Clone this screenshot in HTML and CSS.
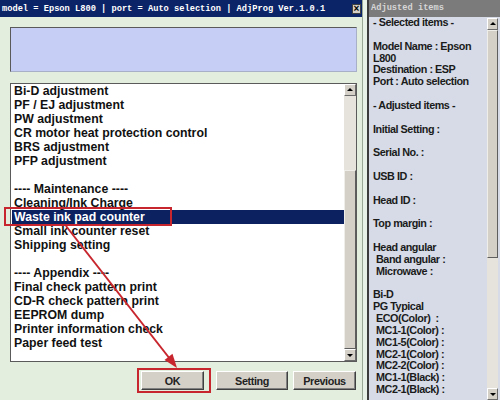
FILE: index.html
```html
<!DOCTYPE html>
<html lang="en">
  <head>
    <meta charset="UTF-8" />
    <title>AdjProg - Epson L800</title>
    <link rel="stylesheet" href="styles.css">
  </head>
  <body>
    <div class="screen">
      <div class="window">
        <div class="titlebar">
          <span class="title">model = Epson L800 | port = Auto selection | AdjProg Ver.1.0.1</span>
          <span class="close">&#215;</span>
        </div>

        <div class="content">
          <div class="info-box"></div>

          <div class="listbox">
            <ul class="items">
              <li>Bi-D adjustment</li>
              <li>PF / EJ adjustment</li>
              <li>PW adjustment</li>
              <li>CR motor heat protection control</li>
              <li>BRS adjustment</li>
              <li>PFP adjustment</li>
              <li>&nbsp;</li>
              <li>---- Maintenance ----</li>
              <li>Cleaning/Ink Charge</li>
              <li class="selected">Waste ink pad counter</li>
              <li>Small ink counter reset</li>
              <li>Shipping setting</li>
              <li>&nbsp;</li>
              <li>---- Appendix ----</li>
              <li>Final check pattern print</li>
              <li>CD-R check pattern print</li>
              <li>EEPROM dump</li>
              <li>Printer information check</li>
              <li>Paper feed test</li>
            </ul>
            <div class="vscroll list-scroll">
              <div class="arrow up"></div>
              <div class="track"></div>
              <div class="thumb"></div>
              <div class="arrow down"></div>
            </div>
          </div>

          <div class="buttons">
            <button class="btn btn-ok">OK</button>
            <button class="btn btn-setting">Setting</button>
            <button class="btn btn-previous">Previous</button>
          </div>
        </div>
      </div>

      <div class="divider"></div>

      <div class="panel">
        <div class="panel-title">Adjusted items</div>
        <div class="panel-body">
          <div class="panel-text">
            <div>- Selected items -</div>
            <div>&nbsp;</div>
            <div>Model Name : Epson</div>
            <div>L800</div>
            <div>Destination : ESP</div>
            <div>Port : Auto selection</div>
            <div>&nbsp;</div>
            <div>- Adjusted items -</div>
            <div>&nbsp;</div>
            <div>Initial Setting :</div>
            <div>&nbsp;</div>
            <div>Serial No. :</div>
            <div>&nbsp;</div>
            <div>USB ID :</div>
            <div>&nbsp;</div>
            <div>Head ID :</div>
            <div>&nbsp;</div>
            <div>Top margin :</div>
            <div>&nbsp;</div>
            <div>Head angular</div>
            <div class="indent">Band angular :</div>
            <div class="indent">Microwave :</div>
            <div>&nbsp;</div>
            <div>Bi-D</div>
            <div>PG Typical</div>
            <div class="indent">ECO(Color)&nbsp; :</div>
            <div class="indent">MC1-1(Color) :</div>
            <div class="indent">MC1-5(Color) :</div>
            <div class="indent">MC2-1(Color) :</div>
            <div class="indent">MC2-2(Color) :</div>
            <div class="indent">MC1-1(Black) :</div>
            <div class="indent">MC2-1(Black) :</div>
          </div>
          <div class="vscroll panel-scroll">
            <div class="arrow up"></div>
            <div class="thumb"></div>
            <div class="track"></div>
            <div class="arrow down"></div>
          </div>
        </div>
      </div>

      <!-- red markup drawn over the screenshot -->
      <svg class="annotation" width="500" height="400" viewBox="0 0 500 400">
        <rect x="5" y="208" width="166" height="17" fill="none" stroke="#c8262e" stroke-width="2" />
        <line x1="66" y1="226" x2="170" y2="359" stroke="#c8262e" stroke-width="2" />
        <polygon points="177,368 164.5,360 172.5,353.8" fill="#c8262e" />
        <rect x="138" y="369" width="72" height="23" fill="none" stroke="#c8262e" stroke-width="2" />
      </svg>
    </div>
  </body>
</html>
```

FILE: styles.css
```css
* {
  margin: 0;
  padding: 0;
  box-sizing: border-box;
}

body {
  width: 500px;
  height: 400px;
  overflow: hidden;
  background: #e8f2e6;
}

.screen {
  position: relative;
  display: flex;
  width: 500px;
  height: 400px;
}

/* left: AdjProg window */

.window {
  width: 363px;
  height: 400px;
  display: flex;
  flex-direction: column;
  background: #e4eede;
  border-right: 1px solid #9aa896;
}

.titlebar {
  height: 17px;
  background: #0b2467;
  display: flex;
  align-items: center;
  justify-content: space-between;
  padding: 0 1px 0 2px;
}

.title {
  font-family: "Liberation Mono", "DejaVu Sans Mono", monospace;
  font-weight: bold;
  font-size: 8.7px;
  color: #ffffff;
  white-space: nowrap;
}

.close {
  width: 9px;
  height: 10px;
  background: #d4d0c8;
  border: 1px solid #404040;
  font-family: "Liberation Sans", Arial, sans-serif;
  font-weight: bold;
  font-size: 10px;
  line-height: 8px;
  text-align: center;
  color: #000;
}

.content {
  flex: 1;
  padding: 10px 5px 0 10px;
  display: flex;
  flex-direction: column;
}

.info-box {
  height: 45px;
  background: #c6cef6;
  border: 1px solid #5a5a5a;
  border-right-color: #a8b0c8;
  border-bottom-color: #a8b0c8;
}

.listbox {
  margin-top: 11px;
  height: 279px;
  display: flex;
  background: #ffffff;
  border: 1px solid #5a5a5a;
}

.items {
  flex: 1;
  list-style: none;
  padding-left: 1px;
  font-family: "Liberation Sans", Arial, sans-serif;
  font-weight: bold;
  font-size: 12.3px;
  line-height: 14px;
  color: #111;
}

.items li {
  padding-left: 2px;
  height: 14px;
  white-space: nowrap;
}

.items li.selected {
  background: #0c2160;
  color: #ffffff;
}

/* scrollbars */

.vscroll {
  width: 12px;
  display: flex;
  flex-direction: column;
  background: #e4e1da;
}

.vscroll .arrow {
  height: 12px;
  background: #d4d0c8;
  border: 1px solid;
  border-color: #ffffff #6a6a6a #6a6a6a #ffffff;
  position: relative;
}

.vscroll .arrow::after {
  content: "";
  position: absolute;
  left: 2px;
  border-left: 3px solid transparent;
  border-right: 3px solid transparent;
}

.vscroll .arrow.up::after {
  top: 3px;
  border-bottom: 3px solid #000;
}

.vscroll .arrow.down::after {
  top: 4px;
  border-top: 3px solid #000;
}

.vscroll .track {
  background: #e6e3dd;
}

.vscroll .thumb {
  background: #d4d0c8;
  border: 1px solid;
  border-color: #f0eee8 #5e5e5e #5e5e5e #f0eee8;
}

.list-scroll .track {
  height: 74px;
}

.list-scroll .thumb {
  flex: 1;
}

.buttons {
  margin-top: 9px;
  display: flex;
  justify-content: flex-end;
  padding-right: 1px;
}

.btn {
  height: 19px;
  background: #d4d0c8;
  border: 1px solid;
  border-color: #ffffff #404040 #404040 #ffffff;
  box-shadow: inset -1px -1px 0 #808080;
  font-family: "Liberation Sans", Arial, sans-serif;
  font-weight: bold;
  font-size: 10.8px;
  letter-spacing: -0.4px;
  color: #222;
}

.btn-ok {
  width: 63px;
}

.btn-setting {
  width: 72px;
  margin-left: 12px;
}

.btn-previous {
  width: 63px;
  margin-left: 5px;
}

/* gap between the two windows */

.divider {
  width: 4px;
  background: #e8f2e6;
}

/* right: adjusted items panel */

.panel {
  flex: 1;
  display: flex;
  flex-direction: column;
  border-left: 2px solid #3c3c3c;
  background: #d6dbe7;
}

.panel-title {
  height: 17px;
  background: #7b7b7b;
  padding-left: 2px;
  font-family: "Liberation Mono", "DejaVu Sans Mono", monospace;
  font-weight: bold;
  font-size: 8.7px;
  line-height: 17px;
  color: #d6d6d6;
  white-space: nowrap;
}

.panel-body {
  flex: 1;
  display: flex;
}

.panel-text {
  flex: 1;
  padding-left: 4px;
  font-family: "Liberation Sans", Arial, sans-serif;
  font-weight: bold;
  font-size: 10.8px;
  letter-spacing: -0.45px;
  line-height: 11.85px;
  color: #1b1b1b;
  white-space: nowrap;
}

.panel-text .indent {
  padding-left: 3px;
}

.panel-scroll {
  margin: 1px 2px 0 0;
  width: 11px;
}

.panel-scroll .thumb {
  height: 228px;
}

.panel-scroll .track {
  flex: 1;
}

.annotation {
  position: absolute;
  left: 0;
  top: 0;
  pointer-events: none;
}
```
